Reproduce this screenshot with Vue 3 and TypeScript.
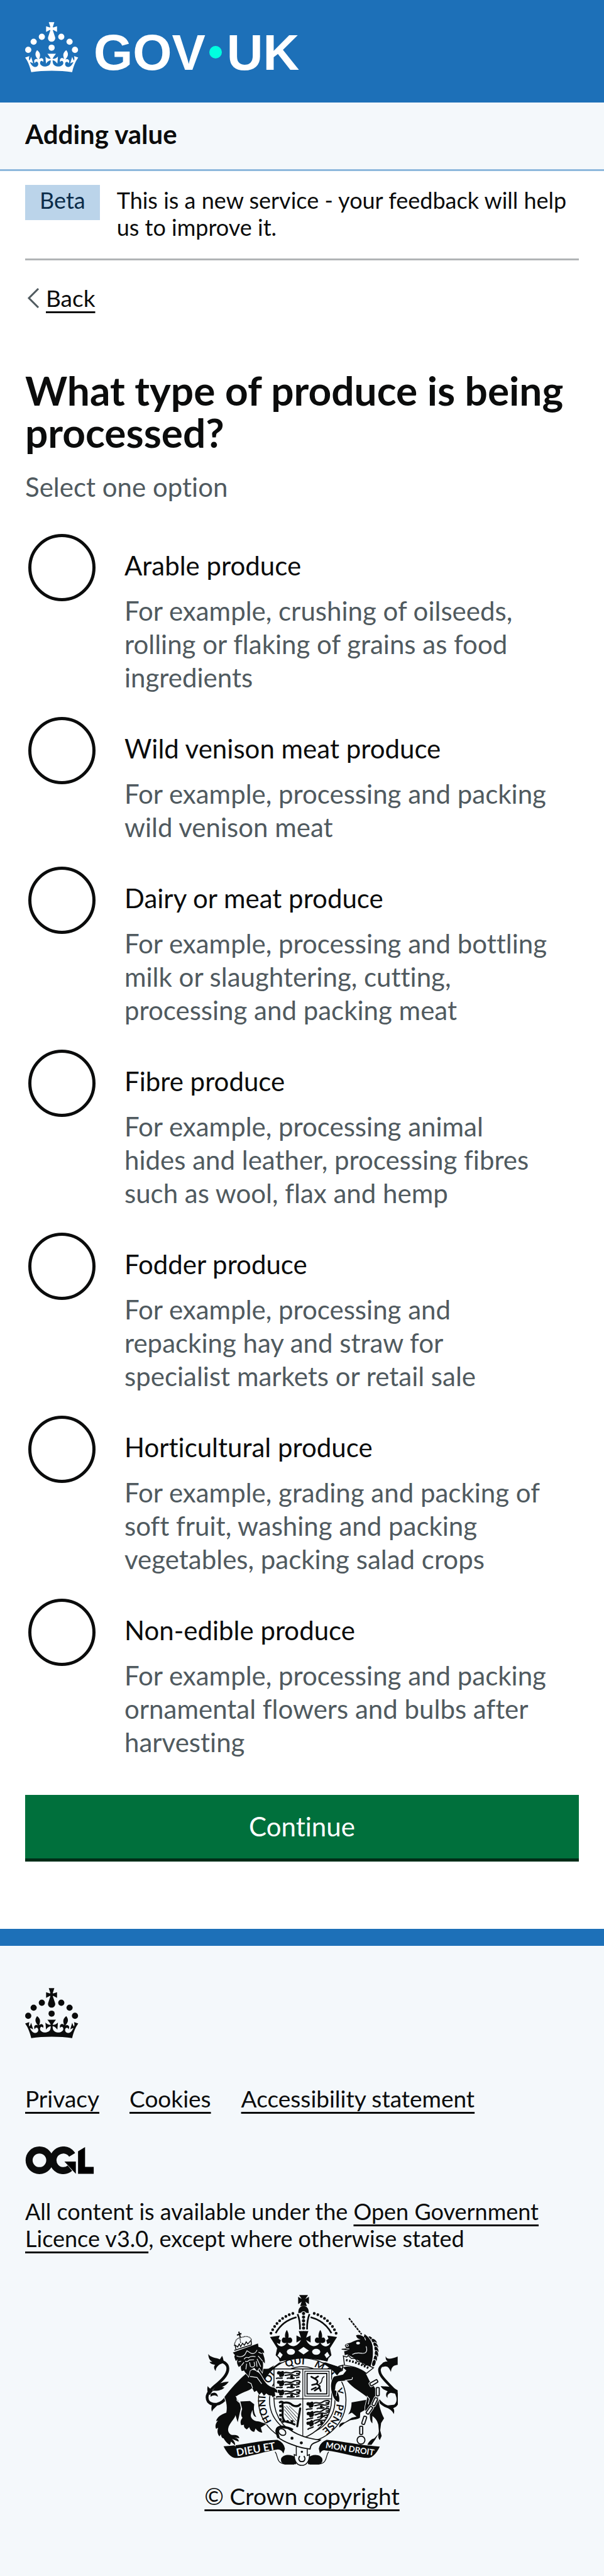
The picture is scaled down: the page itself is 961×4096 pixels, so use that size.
<script setup lang="ts">
import { ref } from 'vue'

interface Produce {
  id: string
  label: string
  hint: string
}

const options: Produce[] = [
  { id: 'arable', label: 'Arable produce', hint: 'For example, crushing of oilseeds,\nrolling or flaking of grains as food\ningredients' },
  { id: 'venison', label: 'Wild venison meat produce', hint: 'For example, processing and packing\nwild venison meat' },
  { id: 'dairy', label: 'Dairy or meat produce', hint: 'For example, processing and bottling\nmilk or slaughtering, cutting,\nprocessing and packing meat' },
  { id: 'fibre', label: 'Fibre produce', hint: 'For example, processing animal\nhides and leather, processing fibres\nsuch as wool, flax and hemp' },
  { id: 'fodder', label: 'Fodder produce', hint: 'For example, processing and\nrepacking hay and straw for\nspecialist markets or retail sale' },
  { id: 'horticultural', label: 'Horticultural produce', hint: 'For example, grading and packing of\nsoft fruit, washing and packing\nvegetables, packing salad crops' },
  { id: 'non-edible', label: 'Non-edible produce', hint: 'For example, processing and packing\nornamental flowers and bulbs after\nharvesting' },
]
const selected = ref('')

const footerLinks = ['Privacy', 'Cookies', 'Accessibility statement']

const crownPearls = [
  [20, 17.6], [10.2, 23.5], [3.7, 33.2], [31.7, 30.6], [43.3, 17.6], [53.2, 23.5], [59.7, 33.2],
]
const crownPath =
  'M33.1,9.8c.2-.1.3-.3.5-.5l4.6,2.4v-6.8l-4.6,1.5c-.1-.2-.3-.3-.5-.5l1.9-5.9h-6.7l1.9,5.9c-.2.1-.3.3-.5.5l-4.6-1.5v6.8l4.6-2.4c.1.2.3.3.5.5l-2.6,8c-.9,2.8,1.2,5.7,4.1,5.7h0c3,0,5.1-2.9,4.1-5.7l-2.6-8ZM37,37.9s-3.4,3.8-4.1,6.1c2.2,0,4.2-.5,6.4-2.8l-.7,8.5c-2-2.8-4.4-4.1-5.7-3.8.1,3.1.5,6.7,5.8,7.2,3.7.3,6.7-1.5,7-3.8.4-2.6-2-4.3-3.7-1.6-1.4-4.5,2.4-6.1,4.9-3.2-1.9-4.5-1.8-7.7,2.4-10.9,3,4,2.6,7.3-1.2,11.1,2.4-1.3,6.2,0,4,4.6-1.2-2.8-3.7-2.2-4.2.2-.3,1.7.7,3.7,3,4.2,1.9.3,4.7-.9,7-5.9-1.3,0-2.4.7-3.9,1.7l2.4-8c.6,2.3,1.4,3.7,2.2,4.5.6-1.6.5-2.8,0-5.3l5,1.8c-2.6,3.6-5.2,8.7-7.3,17.5-7.4-1.1-15.7-1.7-24.5-1.7h0c-8.8,0-17.1.6-24.5,1.7-2.1-8.9-4.7-13.9-7.3-17.5l5-1.8c-.5,2.5-.6,3.7,0,5.3.8-.8,1.6-2.3,2.2-4.5l2.4,8c-1.5-1-2.6-1.7-3.9-1.7,2.3,5,5.2,6.2,7,5.9,2.3-.4,3.3-2.4,3-4.2-.5-2.4-3-3.1-4.2-.2-2.2-4.6,1.6-6,4-4.6-3.7-3.7-4.2-7.1-1.2-11.1,4.2,3.2,4.3,6.4,2.4,10.9,2.5-2.8,6.3-1.3,4.9,3.2-1.8-2.7-4.1-1-3.7,1.6.3,2.3,3.3,4.1,7,3.8,5.4-.5,5.7-4.2,5.8-7.2-1.3-.2-3.7,1-5.7,3.8l-.7-8.5c2.2,2.3,4.2,2.7,6.4,2.8-.7-2.3-4.1-6.1-4.1-6.1h10.6,0Z'

/* words of the garter motto and where each starts along the ring */
const motto: [string, string][] = [
  ['HONI', '2%'], ['SOIT', '20%'], ['QUI', '36%'], ['MAL', '51%'], ['Y', '68%'], ['PENSE', '76%'],
]
/* x, y, rotation of each chain link and mane lock of the unicorn */
const chain = [[238, 384, 60], [259, 432, 0], [243, 486, 25], [214, 532, 35], [186, 586, 18], [170, 640, 0]]
const mane = [[222, 150, 50], [240, 162, 45], [248, 183, 55], [252, 206, 65], [252, 230, 80], [246, 255, 95], [238, 278, 105]]
/* position of each small passant lion on the shield */
const passants = [[428, 466, 0], [428, 516, 0], [428, 566, 0], [585, 634, -5], [585, 688, -10], [582, 744, -20]]
</script>

<template>
  <div class="page">
    <header class="masthead">
      <a class="brand" href="#" aria-label="GOV.UK">
        <svg class="crown" viewBox="0 0 64 60" aria-hidden="true">
          <circle v-for="([x, y], i) in crownPearls" :key="i" :cx="x" :cy="y" r="3.7" />
          <path :d="crownPath" />
        </svg>
        <span class="word">GOV</span>
        <span class="dot"></span>
        <span class="word">UK</span>
      </a>
    </header>

    <nav class="service" aria-label="Service">
      <a href="#">Adding value</a>
    </nav>

    <div class="container">
      <div class="phase">
        <strong class="tag">Beta</strong>
        <span class="phase-text">This is a new service - your feedback will help us to improve it.</span>
      </div>

      <a class="back" href="#">
        <svg viewBox="0 0 20 34" aria-hidden="true"><path d="M18 2 L3 17 L18 32" /></svg>
        <span>Back</span>
      </a>

      <main>
        <form @submit.prevent>
          <fieldset>
            <legend><h1>What type of produce is being processed?</h1></legend>
            <p class="lead">Select one option</p>
            <div v-for="o in options" :key="o.id" class="option">
              <input :id="o.id" v-model="selected" type="radio" name="produce" :value="o.id" :aria-describedby="o.id + '-hint'" />
              <div class="option-text">
                <label :for="o.id">{{ o.label }}</label>
                <p :id="o.id + '-hint'" class="hint">{{ o.hint }}</p>
              </div>
            </div>
          </fieldset>
          <button type="submit">Continue</button>
        </form>
      </main>
    </div>

    <footer>
      <svg class="crown" viewBox="0 0 64 60" aria-hidden="true">
        <circle v-for="([x, y], i) in crownPearls" :key="i" :cx="x" :cy="y" r="3.7" />
        <path :d="crownPath" />
      </svg>
      <ul class="links">
        <li v-for="l in footerLinks" :key="l"><a href="#">{{ l }}</a></li>
      </ul>
      <svg class="ogl" viewBox="14 45 371 150" role="img" aria-label="Open Government Licence">
        <g fill="none" stroke="#0b0c0c" stroke-width="38">
          <circle cx="89.500" cy="120" r="56" />
          <circle cx="219" cy="120" r="56" stroke-dasharray="271 81" transform="rotate(50 219 120)" />
        </g>
        <path d="M225 127H287V193ZM299 71L337 48V156H384V193H299Z" />
      </svg>
      <p class="licence">
        All content is available under the <a href="#">Open Government Licence v3.0</a>, except where otherwise stated
      </p>

      <a class="copyright" href="#">
        <svg class="arms" viewBox="54 62 1032 919" aria-hidden="true">
          <defs>
            <path id="garter" d="M422 757 A192 194 0 1 1 612 818" />
            <clipPath id="shield"><path d="M421 460H731V622C731 720 664 800 576 832C488 800 421 720 421 622Z" /></clipPath>
            <g id="half-crown">
              <path d="M400 288L452 281L446 298L458 306L452 326L436 320C446 344 474 346 489 320C470 326 456 312 466 296C474 286 486 292 485 304C478 288 478 268 490 250C502 268 502 288 496 304C494 292 507 286 516 296C526 312 512 326 494 320C508 346 548 344 566 304L542 318V280L566 292L554 256H582V402Q520 404 452 420L446 402L430 386L438 348Z" />
              <path class="ink-line" stroke-width="9" d="M430 268Q466 202 542 182M548 165Q562 200 561 248" />
              <path class="ink-line" stroke-width="15" stroke-linecap="round" stroke-dasharray="0 20.500" d="M405 268Q440 185 528 160" />
              <ellipse class="paper" cx="512" cy="368" rx="22" ry="16" />
              <path class="paper" d="M440 388L452 368L468 384L456 402Z" />
            </g>
            <g id="passant">
              <path d="M12 8C20 2 26 12 36 6C44 2 50 10 46 18C52 26 42 38 34 36C24 42 18 30 22 24C10 26 6 16 12 8Z" />
              <path class="ink-line" stroke-width="7" d="M46 16C66 6 72 22 92 14C106 6 118 4 130 8C138 14 128 22 112 18M50 28C70 30 80 18 100 28C116 34 124 26 132 24M4 46C18 38 24 48 40 42M62 46C74 36 84 52 104 42M112 42L130 38" />
              <circle cx="88" cy="36" r="8" />
            </g>
          </defs>

          <!-- garter -->
          <path d="M330 456L400 462L450 425H700L790 458L740 520H370Z" />
          <ellipse class="paper ring" cx="573" cy="628" rx="235" ry="226" />
          <ellipse class="paper ring" cx="573" cy="628" rx="176" ry="180" />
          <text v-for="[word, start] in motto" :key="word" class="motto" font-size="54" fill="#0b0c0c"><textPath href="#garter" :startOffset="start">{{ word }}</textPath></text>

          <!-- crown -->
          <use href="#half-crown" />
          <use href="#half-crown" transform="matrix(-1 0 0 1 1160 0)" />
          <path d="M556 63H604L590 84L609 72V112L590 98L598 122H562L570 98L551 112V72L570 84Z" />
          <path d="M552 160C550 132 566 122 580 122C594 122 610 132 608 160L594 158Q580 142 566 158Z" />
          <path class="ink-line" stroke-width="17" stroke-linecap="round" stroke-dasharray="0 19.500" d="M580 162V246" />
          <path class="paper" d="M580 342L609 362L580 382L551 362Z" />

          <!-- shield -->
          <path class="paper ring" d="M421 460H731V622C731 720 664 800 576 832C488 800 421 720 421 622Z" />
          <path class="ink-line" stroke-width="4" d="M576 460V830M421 621H731" />
          <g clip-path="url(#shield)">
            <use v-for="([x, y, r], i) in passants" :key="'p' + i" href="#passant" :transform="`translate(${x} ${y}) rotate(${r})`" />
          </g>
          <g class="ink-line">
            <rect x="587" y="472" width="130" height="134" stroke-width="4" />
            <rect x="599" y="484" width="106" height="110" stroke-width="6" />
            <path stroke-width="9" stroke-linecap="round" d="M622 502L640 512L658 500M640 512Q664 524 650 540L626 546M650 540Q676 552 662 562L640 576M624 570L646 560M664 556L672 578" />
            <path stroke-width="5" d="M664 540C690 530 668 512 692 500" />
            <path stroke-width="11" stroke-linecap="round" d="M452 640Q462 632 472 642Q500 636 520 654Q545 668 562 650M466 648C474 690 456 716 480 742Q510 748 532 758M562 672L546 768" />
            <path stroke-width="15" stroke-linecap="round" stroke-dasharray="0 24" d="M456 660V742H530" />
            <path stroke-width="3" d="M476 660L544 740M488 658L548 724M502 658L552 706M476 678L534 746M478 700L518 744" />
          </g>

          <!-- belt and ribbons -->
          <path class="ink-line" stroke-width="4" d="M427 905C445 925 430 965 480 971H530M715 905C697 925 712 965 662 971H612" />
          <path d="M460 940C475 915 520 918 540 938V972H480C465 968 455 960 460 940ZM680 940C665 915 622 918 604 938V972H662C676 968 686 960 680 940Z" />
          <path class="paper ring" d="M541 870H600V925L612 920C612 960 592 978 570 978C548 978 530 960 530 920L541 925Z" />
          <path class="ink-line" stroke-width="6" d="M560 928C548 944 558 958 571 958C584 958 594 944 582 928" />
          <path class="paper" stroke="#0b0c0c" stroke-width="6" d="M432 800C430 770 450 765 480 768C510 790 560 830 670 842C650 860 620 850 615 890C550 885 470 850 440 825Z" />
          <path class="ink-line" stroke-width="13" d="M446 830C436 800 432 775 456 773C490 772 505 776 522 788" />
          <ellipse class="ink-line" stroke-width="6" cx="465" cy="799" rx="21" ry="16" transform="rotate(35 465 799)" />
          <circle cx="518" cy="832" r="8" /><circle cx="568" cy="857" r="8" /><circle cx="571" cy="905" r="6" />
          <path d="M150 875C250 872 350 842 440 841Q474 855 480 888L472 914Q462 892 442 892C360 905 270 938 212 938Q180 934 150 875Z" />
          <path d="M990 877C890 872 790 848 704 841Q668 855 662 888L668 914Q680 892 700 898C780 905 870 938 930 938Q962 934 990 877Z" />
          <text class="motto" font-size="56" fill="#f4f8fb" transform="translate(222 929) rotate(-10)">DIEU ET</text>
          <text class="motto" font-size="45" fill="#f4f8fb" transform="translate(697 884) rotate(9)">MON DROIT</text>

          <!-- lion -->
          <g transform="translate(30 210)">
            <path class="ink-line" stroke-width="15" d="M135 402C105 448 60 448 38 425C20 395 40 370 75 340C120 305 152 270 141 235C130 208 100 208 72 205" />
            <path d="M38 170C50 190 80 190 100 198L112 180C120 195 118 205 125 215L100 225C80 240 78 250 78 262C65 245 68 235 75 228C60 225 48 222 45 212L60 212C46 205 38 190 38 170ZM148 318C120 320 100 325 85 335L60 366C90 370 112 362 125 350L112 346C130 340 140 330 148 318ZM35 342C42 355 58 360 62 368L45 390C32 375 30 360 35 342ZM58 440L92 438C80 455 62 465 58 480C52 465 55 455 58 440ZM50 385C70 370 88 380 90 400C80 390 65 388 50 400Z" />
            <path class="halo" d="M210 425L262 422L285 440C280 470 285 490 296 508C280 505 278 490 275 470L268 490C262 510 275 525 295 530C315 530 330 540 352 545L320 565L328 592C310 590 300 580 292 570L285 588C270 585 262 575 258 562L245 575C232 568 228 560 230 550L215 552C208 535 212 525 222 512C210 500 215 480 220 465Z" />
            <path d="M322 252L362 248L392 230L345 300L328 305Z" />
            <path class="halo" d="M235 280C200 310 160 355 125 400C137 430 140 455 135 485C105 495 85 510 80 530L90 528C75 545 74 560 80 572L91 566C84 585 88 600 98 612L106 600C106 612 112 622 120 622C130 640 145 655 155 657L160 640L182 660C184 645 175 635 165 626L200 640C205 632 195 622 178 618L204 622C205 610 190 602 165 605C150 600 142 585 145 570C150 540 180 520 184 498L196 536L213 460C210 440 205 425 192 412L188 398C205 380 258 368 274 352L285 374L298 366L312 388L325 376L337 394L350 382C360 388 366 398 378 392L384 402L398 394L395 374L410 378L408 364L392 350C366 346 345 330 325 290C310 262 280 250 262 255Z" />
            <path class="paper-line" stroke-width="4" d="M250 320L268 328L276 352M186 396Q196 404 192 418L204 430M262 290L300 296L325 330" />
            <path class="halo" d="M170 162L305 113L308 132C325 135 340 150 338 165L328 160C338 180 344 200 342 220L330 208C335 225 332 245 328 268L312 244L300 262L285 244L262 258L254 290C245 275 235 270 230 258L218 262C212 250 212 240 214 230L202 240C192 225 190 210 195 198L186 208C180 190 174 180 182 176Z" />
            <path class="paper-line" stroke-width="4" d="M190 180Q215 192 234 174L246 152L268 166Q290 172 300 148M230 198Q240 182 254 190Q268 178 292 184M236 208Q250 214 258 202L284 200M260 214L264 236Q276 246 288 232L284 212M200 212L214 208M216 232L230 214M240 252L244 222M300 196L320 238M306 180L330 208M308 160L326 168M300 238L296 208" />
            <path class="ink-line" stroke-width="5" d="M178 150L272 120M186 144L182 122L196 132L204 116L212 130L222 112L232 122L242 104L250 116L268 96L270 120M176 164L300 120" />
            <path class="ink-line" stroke-width="5" stroke-dasharray="5 3" d="M178 126Q182 84 212 82Q256 66 270 92M212 110L208 84" />
            <path class="ink-line" stroke-width="7" d="M202 50L210 82M192 68L216 60" />
          </g>

          <!-- unicorn -->
          <g transform="translate(720 150)">
            <path class="ink-line" stroke-width="8" stroke-dasharray="13 4" d="M104 37L172 124" />
            <path class="ink-line" stroke-width="14" d="M264 478C290 512 330 525 352 508C378 485 368 440 335 410C300 372 266 345 268 312C274 285 300 278 330 275" />
            <path d="M302 241C305 260 330 258 366 243V288C350 290 332 294 330 326C318 300 310 290 285 300C270 284 290 268 312 270C302 262 300 252 302 241ZM275 402C300 405 320 402 345 412L366 425V445L330 438C318 440 308 450 312 466C300 456 302 440 312 430C290 420 280 415 275 402ZM366 500L340 518C350 530 348 540 345 552C338 535 325 525 290 508Z" />
            <path d="M0 283L62 302L40 318L10 312Z" />
            <path class="halo" d="M118 490L200 475L190 530L165 545L163 572C150 582 130 582 110 586L80 602L52 625C50 605 60 598 82 596L120 572L145 566L120 545L100 554C115 535 118 510 118 490Z" />
            <path class="halo" d="M72 302C100 290 150 300 190 325L215 375C240 400 258 430 262 470C268 520 280 550 293 575L277 600L272 640L280 670L270 692C258 680 262 660 265 645L262 610C255 580 240 570 230 562L230 602C215 590 218 570 216 555L196 540C182 520 200 490 202 462C180 440 120 410 92 372L48 376C34 384 30 400 30 424L42 432C50 446 56 470 50 488C30 484 18 460 12 435C2 400 10 365 25 350L72 340L90 318Z" />
            <path class="paper-line" stroke-width="4" d="M82 372L120 366Q124 360 122 354M200 455L214 470L208 500M28 424L40 420L36 456" />
            <path d="M265 655L245 690L225 718H203C210 700 225 685 240 683Z" />
            <ellipse v-for="([x, y, r], i) in mane" :key="'m' + i" class="halo" rx="18" ry="9" :transform="`translate(${x} ${y}) rotate(${r})`" />
            <path class="halo" d="M142 130C155 122 172 130 184 138L188 122L202 134C218 150 232 170 232 200C236 240 228 275 218 302L150 262L95 232L82 236L78 215L100 210L64 206L66 202L90 200L82 185C85 172 100 174 115 168C135 158 150 152 168 151C152 150 146 142 142 130Z" />
            <path class="paper-line" stroke-width="4" d="M196 188C206 215 195 228 175 226C155 222 135 225 122 232M188 140L194 156M90 202H106" />
            <ellipse class="paper" cx="153" cy="171" rx="10" ry="7" /><circle class="paper-line" cx="95" cy="184" r="6" stroke-width="4" />
            <path class="paper" stroke="#0b0c0c" stroke-width="5" d="M74 240L92 246L100 238L118 254L138 254L150 270L172 274L184 288L206 290L236 304L198 334C160 304 110 292 80 290Z" />
            <path class="ink-line" stroke-width="12" stroke-dasharray="9 8" d="M88 262L130 272L172 288L212 306" />
            <path class="ink-line" stroke-width="6" d="M50 296L72 290L68 318L44 328Z" />
            <g v-for="([x, y, r], i) in chain" :key="'c' + i" :transform="`translate(${x} ${y}) rotate(${r})`">
              <rect class="paper" x="-14" y="-28" width="28" height="56" rx="8" />
              <rect class="paper" x="-8" y="-22" width="16" height="44" rx="4" stroke="#0b0c0c" stroke-width="6" />
            </g>
            <circle class="paper" cx="169" cy="692" r="21" stroke="#0b0c0c" stroke-width="6" />
          </g>
        </svg>
        <span>© Crown copyright</span>
      </a>
    </footer>
  </div>
</template>

<style>
body {
  margin: 0;
  background: #f4f8fb;
}
</style>

<style scoped>
.page {
  background: #fff;
  color: #0b0c0c;
  font-family: Lato, "Noto Sans", sans-serif;
  font-size: 42px;
  line-height: 53px;
  font-variant-ligatures: none;
}
a {
  color: inherit;
}
p,
h1,
ul,
fieldset,
legend {
  margin: 0;
  padding: 0;
  border: 0;
}
fieldset {
  min-width: 0;
}
.crown {
  display: block;
  width: 85px;
  height: 80px;
  fill: currentColor;
}
.masthead {
  background: #1d70b8;
  padding: 35px 40px 48px;
}
.brand {
  display: flex;
  align-items: flex-start;
  height: 80px;
  color: #fff;
  text-decoration: none;
}
.word {
  margin-top: 9px;
  font: 700 80px/80px "Liberation Sans", Arial, sans-serif;
}
.crown + .word {
  margin-left: 24px;
}
.dot {
  width: 20px;
  height: 20px;
  margin: 38px 8px 0 6px;
  border-radius: 50%;
  background: #00ffe0;
}
.service {
  padding: 24px 40px 29px;
  background: #f4f8fb;
  border-bottom: 3px solid #8eb8dc;
  font-weight: 700;
}
.service a {
  display: block;
  text-decoration: none;
}
.container {
  padding: 0 40px 107px;
}
.phase {
  display: flex;
  align-items: flex-start;
  gap: 27px;
  padding: 22px 0 28px;
  border-bottom: 3px solid #b1b4b6;
  font-size: 36px;
  line-height: 43px;
}
.tag {
  padding: 3px 23px 10px;
  background: #bbd4ea;
  color: #0c2d4a;
  font-weight: 400;
}
.phase-text {
  padding-top: 3px;
}
.back {
  display: flex;
  align-items: center;
  gap: 10px;
  width: fit-content;
  margin-top: 38px;
  padding-left: 3px;
  font-size: 37px;
  line-height: 43px;
  text-decoration: none;
}
.back svg {
  width: 20px;
  height: 34px;
  fill: none;
  stroke: #505a5f;
  stroke-width: 3;
}
.back span,
footer a {
  text-decoration: underline;
  text-decoration-thickness: 3px;
  text-underline-offset: 7px;
  text-decoration-skip-ink: none;
}
h1 {
  margin-top: 92px;
  font-size: 64px;
  line-height: 67px;
  font-weight: 700;
}
.lead {
  margin: 27px 0 48px;
  color: #505a5f;
}
.option {
  display: flex;
  align-items: flex-start;
  gap: 46px;
  padding: 0 0 36px 5px;
}
.option input {
  appearance: none;
  flex: none;
  width: 107px;
  height: 107px;
  margin: 0;
  border: 5px solid #0b0c0c;
  border-radius: 50%;
  background: #fff;
}
.option input:checked {
  background: radial-gradient(#0b0c0c 45%, #fff 47%);
}
.option-text {
  flex: 1;
  padding-top: 24px;
}
.option label {
  display: block;
  margin-bottom: 19px;
}
.hint {
  color: #505a5f;
  white-space: pre-line;
}
button {
  display: block;
  width: 100%;
  margin-top: 21px;
  padding: 24px 0;
  border: 0;
  border-bottom: 5px solid #002d18;
  background: #00703c;
  color: #fff;
  font: inherit;
}
footer {
  padding: 67px 40px 106px;
  border-top: 27px solid #1d70b8;
  background: #f4f8fb;
  font-size: 37px;
  line-height: 43px;
}
.links {
  display: flex;
  flex-wrap: wrap;
  gap: 0 48px;
  margin: 74px 0 55px;
  list-style: none;
}
.ogl {
  display: block;
  width: 110px;
  height: 44px;
  margin-bottom: 38px;
}
.licence {
  font-size: 36px;
}
footer .copyright {
  display: flex;
  flex-direction: column;
  align-items: center;
  gap: 26px;
  width: fit-content;
  margin: 68px auto 0;
  text-decoration: none;
}
.copyright span {
  text-decoration: underline;
  text-decoration-thickness: 3px;
  text-underline-offset: 7px;
  text-decoration-skip-ink: none;
}
.arms {
  display: block;
  width: 306px;
  height: 272px;
  fill: #0b0c0c;
}
.arms .paper {
  fill: #f4f8fb;
}
.arms .ring {
  stroke: #0b0c0c;
  stroke-width: 5px;
}
.arms .ink-line {
  fill: none;
  stroke: #0b0c0c;
}
.arms .paper-line {
  fill: none;
  stroke: #f4f8fb;
}
.arms .halo {
  stroke: #f4f8fb;
  stroke-width: 6px;
  paint-order: stroke;
}
.motto {
  font-family: Lato, sans-serif;
  font-weight: 700;
}
</style>
